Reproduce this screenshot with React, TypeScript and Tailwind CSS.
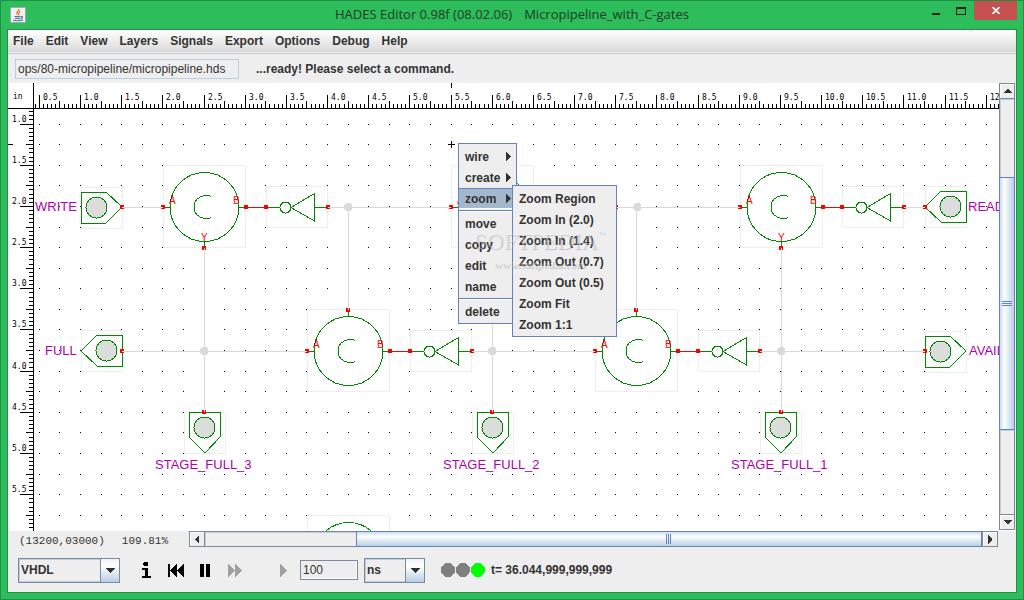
import { useState } from "react";
import type { ReactNode } from "react";

const GREEN = "#008800";
const RED = "#ff0000";
const WIRE = "#dadada";
const FRAME = "#eeeeee";

const menus = ["File", "Edit", "View", "Layers", "Signals", "Export", "Options", "Debug", "Help"];
const zoomItems = [
  "Zoom Region",
  "Zoom In (2.0)",
  "Zoom In (1.4)",
  "Zoom Out (0.7)",
  "Zoom Out (0.5)",
  "Zoom Fit",
  "Zoom 1:1",
];

// A quarter inch on screen at 109.81%
const STEP = 20.588;
const gridX = (n: number) => Math.round(38.8 + n * STEP);
const gridY = (n: number) => Math.round(123.6 + n * STEP);
const range = (from: number, to: number) => Array.from({ length: to - from }, (_, i) => from + i);

type Side = "left" | "right" | "top" | "bottom" | "none";

// Connector square, the attached wire cuts a notch in it
const Pin = ({ x, y, notch = "none" }: { x: number; y: number; notch?: Side }) => (
  <g>
    <rect x={x - 2} y={y - 2} width={4} height={4} fill={RED} stroke="none" />
    {notch === "right" && <rect x={x} y={y} width={2} height={1} fill="#fff" />}
    {notch === "left" && <rect x={x - 2} y={y} width={2} height={1} fill="#fff" />}
    {notch === "top" && <rect x={x} y={y - 2} width={1} height={2} fill="#fff" />}
    {notch === "bottom" && <rect x={x} y={y} width={1} height={2} fill="#fff" />}
  </g>
);

const PinName = ({ x, y, children }: { x: number; y: number; children: ReactNode }) => (
  <text x={x} y={y} fill={RED} fontSize={10} stroke="none">
    {children}
  </text>
);

const CGate = ({ x, y, flip = false }: { x: number; y: number; flip?: boolean }) => (
  <g transform={`translate(${x} ${y})`}>
    <rect x={-41.5} y={-41.5} width={82} height={82} fill="#fff" stroke={FRAME} />
    <g fill="none" stroke={GREEN}>
      <circle cx={-0.5} cy={0} r={34.5} />
      <path d="M6 -10.5 L4 -11.5 H0 C-7 -10.5 -11 -6 -11 0 S-7 10.5 0 11.5 H4 L6 10.5" />
      <path d={flip ? "M-40 .5 H-34 M34 .5 H41 M-.5 -40 V-34" : "M-40 .5 H-34 M34 .5 H41 M-.5 34 V40"} />
    </g>
    <PinName x={-36} y={-3}>A</PinName>
    <PinName x={28} y={-3}>B</PinName>
    {!flip && <PinName x={-4} y={34}>Y</PinName>}
    <Pin x={-42} y={0} notch="left" />
    <Pin x={41} y={0} />
    {flip ? <Pin x={-1} y={-41} notch="top" /> : <Pin x={-1} y={41} notch="bottom" />}
  </g>
);

const Inverter = ({ x, y }: { x: number; y: number }) => (
  <g transform={`translate(${x} ${y})`}>
    <rect x={0.5} y={-20.5} width={61} height={41} fill="#fff" stroke={FRAME} />
    <path d="M-20 .5 H0" stroke={RED} />
    <g fill="none" stroke={GREEN}>
      <path d="M0 .5 H14 M48.5 .5 H61" />
      <circle cx={19.5} cy={0.5} r={5.5} />
      <path d="M25 .5 L48.5 -13.5 V14 Z" />
    </g>
    <Pin x={0} y={0} />
    <Pin x={62} y={0} notch="right" />
  </g>
);

// Switches and lamps share one outline, drawn pointing right
const Port = ({ x, y, angle }: { x: number; y: number; angle: 0 | 90 | 180 }) => (
  <g transform={`translate(${x} ${y}) rotate(${angle})`}>
    <rect x={-20} y={-20} width={41} height={41} fill="#fff" stroke={FRAME} />
    <path d="M-20 -15 H5 L21 0 L5 16 H-20 Z" fill="none" stroke={GREEN} />
    <circle cx={-4.5} cy={0.5} r={10.5} fill="#dcdcdc" stroke={GREEN} />
  </g>
);

const Junction = ({ x, y }: { x: number; y: number }) => (
  <path
    transform={`translate(${x} ${y})`}
    d="M-2 -4 H2 L4 -2 V2 L2 4 H-2 L-4 2 V-2 Z"
    fill={WIRE}
    stroke="none"
  />
);

const Label = ({ x, y, children }: { x: number; y: number; children: ReactNode }) => (
  <text x={x} y={y} fill="#b000b0" fontSize={13} stroke="none">
    {children}
  </text>
);

const tickLength = (n: number) => (n % 10 === 0 ? 13 : n % 5 === 0 ? 7 : 4);

const Rulers = () => (
  <g>
    <path d="M8 108.5 H3000 M33.5 83 V3000" stroke="#000" />
    {range(-1, 260).map((n) => {
      const x = Math.round(38.8 + (n * STEP) / 5);
      return <rect key={n} x={x} y={108 - tickLength(n)} width={1} height={tickLength(n)} />;
    })}
    {range(-3, 200).map((n) => {
      const y = Math.round(123.6 + (n * STEP) / 5);
      return <rect key={n} x={33 - tickLength(n)} y={y} width={tickLength(n)} height={1} />;
    })}
    <g fontFamily="DejaVu Sans Mono, monospace" fontSize={8}>
      <text x={13} y={99}>in</text>
      {range(0, 24).map((n) => (
        <text key={n} x={gridX(n * 2) + 4} y={100}>{(0.5 + n / 2).toFixed(1)}</text>
      ))}
      {range(0, 10).map((n) => (
        <text key={n} x={12} y={gridY(n * 2) - 2}>{(1 + n / 2).toFixed(1)}</text>
      ))}
    </g>
    <path d="M451.5 83 V88 M8 144.5 H13" stroke="#000" />
  </g>
);

const Schematic = () => (
  <svg
    className="absolute inset-0 h-full w-full"
    shapeRendering="crispEdges"
    fontFamily="Liberation Sans, Arial, sans-serif"
    role="img"
    aria-label="Micropipeline schematic"
  >
    <g transform="translate(-8 -83)">
      {range(0, 70).map((col) =>
        range(0, 40).map((row) => (
          <rect key={`${col}-${row}`} x={gridX(col)} y={gridY(row)} width={1} height={1} />
        ))
      )}
      <Port x={101} y={207} angle={0} />
      <Port x={102} y={351} angle={180} />
      <Port x={946} y={207} angle={180} />
      <Port x={945} y={351} angle={0} />
      <Port x={205} y={432} angle={90} />
      <Port x={493} y={432} angle={90} />
      <Port x={781} y={432} angle={90} />
      <CGate x={205} y={207} />
      <CGate x={493} y={207} />
      <CGate x={782} y={207} />
      <CGate x={349} y={351} flip />
      <CGate x={637} y={351} flip />
      <CGate x={349} y={557} />
      <Inverter x={266} y={207} />
      <Inverter x={554} y={207} />
      <Inverter x={842} y={207} />
      <Inverter x={410} y={351} />
      <Inverter x={698} y={351} />
      <path
        fill="none"
        stroke={WIRE}
        d="M124 207.5 H161 M330 207.5 H449 M618 207.5 H738 M906 207.5 H923
          M124 351.5 H305 M474 351.5 H593 M762 351.5 H923
          M204.5 250 V411 M492.5 250 V411 M781.5 250 V411 M348.5 207 V308 M636.5 207 V308"
      />
      <Junction x={348} y={207} />
      <Junction x={637} y={207} />
      <Junction x={204} y={351} />
      <Junction x={492} y={351} />
      <Junction x={781} y={351} />
      <Pin x={122} y={207} notch="right" />
      <Pin x={122} y={351} notch="right" />
      <Pin x={925} y={207} notch="left" />
      <Pin x={925} y={351} notch="left" />
      <Pin x={204} y={412} notch="top" />
      <Pin x={492} y={412} notch="top" />
      <Pin x={781} y={412} notch="top" />
      <Label x={35} y={211}>WRITE</Label>
      <Label x={45} y={355}>FULL</Label>
      <Label x={968} y={211}>READY</Label>
      <Label x={969} y={355}>AVAIL</Label>
      <Label x={155} y={469}>STAGE_FULL_3</Label>
      <Label x={443} y={469}>STAGE_FULL_2</Label>
      <Label x={731} y={469}>STAGE_FULL_1</Label>
      <path d="M448 144.5 H455 M451.5 141 V148" stroke="#000" />
      <Rulers />
    </g>
  </svg>
);

const MenuItem = ({ label, sub = false, active = false }: { label: string; sub?: boolean; active?: boolean }) => (
  <button
    role="menuitem"
    aria-haspopup={sub || undefined}
    className={`flex h-[21px] w-full items-center justify-between border-y pl-1.5 pr-[5px] text-left whitespace-nowrap ${
      active ? "border-t-[#6382bf] border-b-white bg-[#a3b8cc]" : "border-transparent"
    }`}
  >
    {label}
    {sub && (
      <svg className="shrink-0" width="5" height="9" viewBox="0 0 5 9" fill="#333" shapeRendering="crispEdges">
        <path d="M0 0 L5 4 V5 L0 9 Z" />
      </svg>
    )}
  </button>
);

const Separator = () => (
  <div role="separator" className="h-1 pt-px">
    <div className="h-0.5 border-t border-[#6382bf] bg-white" />
  </div>
);

const ContextMenu = () => (
  <>
    <div role="menu" className="absolute top-[60px] left-[450px] w-[59px] border border-[#6382bf] bg-[#eee] pt-0.5 pb-px">
      <MenuItem label="wire" sub />
      <MenuItem label="create" sub />
      <MenuItem label="zoom" sub active />
      <Separator />
      <MenuItem label="move" />
      <MenuItem label="copy" />
      <MenuItem label="edit" />
      <MenuItem label="name" />
      <Separator />
      <MenuItem label="delete" />
    </div>
    <div role="menu" className="absolute top-[102px] left-[504px] w-[105px] border border-[#6382bf] bg-[#eee] pt-0.5 pb-px">
      {zoomItems.map((item) => (
        <MenuItem key={item} label={item} />
      ))}
    </div>
  </>
);

const Watermark = () => (
  <div className="pointer-events-none absolute top-[147px] left-[466px] font-['Liberation_Serif',serif] font-normal text-white/35 [text-shadow:1px_1px_1px_rgba(0,0,0,0.18)]">
    <div className="flex items-start text-[23px] leading-6">
      SOFTPEDIA<span className="text-[7px] leading-2">™</span>
    </div>
    <div className="pt-0.5 pl-5 text-[11px] leading-4 font-bold">www.softpedia.com</div>
  </div>
);

const arrows = {
  up: "M4 0 H5 L9 4 H0 Z",
  down: "M0 0 H9 L5 4 H4 Z",
  left: "M4 0 V9 L0 5 V4 Z",
  right: "M0 0 V9 L4 5 V4 Z",
};

const ScrollButton = ({ dir }: { dir: "up" | "down" | "left" | "right" }) => (
  <button
    aria-label={`Scroll ${dir}`}
    className="flex size-4 shrink-0 items-center justify-center border border-[#7a8a99] bg-[#eee] shadow-[inset_1px_1px_0_#fff]"
  >
    {dir === "up" || dir === "down" ? (
      <svg width="9" height="4" fill="#333" shapeRendering="crispEdges"><path d={arrows[dir]} /></svg>
    ) : (
      <svg width="4" height="9" fill="#333" shapeRendering="crispEdges"><path d={arrows[dir]} /></svg>
    )}
  </button>
);

const VerticalScroll = () => (
  <div role="scrollbar" aria-orientation="vertical" aria-controls="canvas" aria-valuenow={48} className="mr-px flex w-4 flex-col border-b border-white">
    <ScrollButton dir="up" />
    <div className="flex-[79] border-x border-[#7a8a99] bg-[#eee] shadow-[inset_1px_1px_0_#b8cfe5]" />
    <div className="flex flex-[252] items-center justify-center border border-[#6382bf] bg-linear-to-r from-[#c8dbee] via-white via-30% to-[#b8cfe5]">
      <div className="h-[5px] w-2.5 border-y border-[#6382bf] pt-px">
        <div className="h-px bg-[#6382bf]" />
      </div>
    </div>
    <div className="flex-[85] border-x border-[#7a8a99] bg-[#eee] shadow-[inset_1px_1px_0_#b8cfe5]" />
    <ScrollButton dir="down" />
  </div>
);

const HorizontalScroll = () => (
  <div role="scrollbar" aria-orientation="horizontal" aria-controls="canvas" aria-valuenow={100} className="mr-[18px] flex h-4 flex-1">
    <ScrollButton dir="left" />
    <div className="flex-[151] border-y border-[#7a8a99] bg-[#eee] shadow-[inset_1px_1px_0_#b8cfe5]" />
    <div className="flex flex-[626] items-center justify-center border border-[#6382bf] bg-linear-to-b from-[#c8dbee] via-white via-30% to-[#b8cfe5]">
      <div className="h-2.5 w-[5px] border-x border-[#6382bf] pl-px">
        <div className="h-full w-px bg-[#6382bf]" />
      </div>
    </div>
    <ScrollButton dir="right" />
  </div>
);

const Combo = ({ label, options, className }: { label: string; options: string[]; className: string }) => (
  <div className={`relative h-[25px] border border-[#7a8a99] ${className}`}>
    <select
      aria-label={label}
      className="h-full w-full appearance-none border border-[#b8cfe5] bg-[#eee] pr-5 pl-px font-bold text-[#333] outline-none"
    >
      {options.map((o) => (
        <option key={o}>{o}</option>
      ))}
    </select>
    <span className="pointer-events-none absolute inset-y-0 right-0 flex w-[19px] items-center justify-center border-l border-[#7a8a99] bg-linear-to-b from-[#eef3f8] via-white via-30% to-[#b8cfe5]">
      <svg width="10" height="5" fill="#333" shapeRendering="crispEdges"><path d="M0 0 H10 L5 5 Z" /></svg>
    </span>
  </div>
);

const ToolButton = ({ label, disabled = false, className, children }: { label: string; disabled?: boolean; className: string; children: ReactNode }) => (
  <button aria-label={label} disabled={disabled} className={className}>
    <svg width="17" height="17" viewBox="0 0 17 17" fill={disabled ? "#a0a0a0" : "#000"} shapeRendering="crispEdges">
      {children}
    </svg>
  </button>
);

const JavaIcon = () => (
  <svg width="16" height="16" viewBox="0 0 16 16" fill="none">
    <rect x="0.5" y="0.5" width="15" height="15" rx="1" fill="#eef2f5" stroke="#9aa9b5" />
    <path d="M9 2 C9 4.5 5.5 4.5 7 7.5 M10.5 4.5 C7.5 5.5 9.5 6.5 8 8.5" stroke="#e8842c" strokeWidth="1.4" />
    <path d="M4.5 9.5 H10.5 M5 11.3 H10 M11 9.5 C13 9 13 11 10.5 11.5 M3 13 C5 14 11 14 13 12.8" stroke="#4c7590" strokeWidth="1.2" />
  </svg>
);

const TitleBar = () => (
  <header className="relative flex h-7 shrink-0 items-center justify-center gap-3 font-['Open_Sans','Noto_Sans',sans-serif] text-[13px] text-[#1d3b27]">
    <div className="absolute top-1.5 left-[3px]"><JavaIcon /></div>
    <span>HADES Editor 0.98f (08.02.06)</span>
    <span>Micropipeline_with_C-gates</span>
    <div className="absolute top-0 right-0 flex h-[19px] items-stretch">
      <button aria-label="Minimize" className="flex w-6 items-center justify-center">
        <svg width="8" height="8" fill="#222" shapeRendering="crispEdges"><rect y="6" width="8" height="2" /></svg>
      </button>
      <button aria-label="Maximize" className="flex w-[26px] items-center justify-center">
        <svg width="10" height="8" fill="none" stroke="#222" shapeRendering="crispEdges">
          <path d="M.5 1 V7.5 H9.5 V1" />
          <path d="M0 1 H10" strokeWidth="2" />
        </svg>
      </button>
      <button aria-label="Close" className="flex w-[43px] items-center justify-center bg-[#c75050]">
        <svg width="8" height="7" stroke="#fff" strokeWidth="1.7"><path d="M.5 0 L7.5 7 M7.5 0 L.5 7" /></svg>
      </button>
    </div>
  </header>
);

export default function App() {
  const [path, setPath] = useState("ops/80-micropipeline/micropipeline.hds");
  const [steps, setSteps] = useState("100");

  return (
    <div className="flex h-screen flex-col border border-[#229147] bg-[#2dbd5a] px-1.5 pb-1.5 font-['Liberation_Sans',Arial,sans-serif] text-[12px] text-[#333]">
      <TitleBar />
      <div className="flex min-h-0 flex-1 flex-col border border-[#229147] bg-[#eee]">
        <nav className="flex h-[22px] shrink-0 items-center bg-linear-to-b from-white to-[#dadada] pr-1.5 pl-[5px] font-bold">
          {menus.map((m) => (
            <button key={m} className="mr-3">{m}</button>
          ))}
        </nav>
        <div className="mt-px flex h-[30px] shrink-0 items-center gap-[17px] border-t border-[#ccc] pl-[7px]">
          <input
            aria-label="Design file"
            value={path}
            onChange={(e) => setPath(e.target.value)}
            className="h-5 w-56 border border-[#b8cfe5] px-0.5 outline-none"
          />
          <span className="font-bold">...ready! Please select a command.</span>
        </div>

        <div className="flex min-h-0 flex-1">
          <main id="canvas" className="relative min-w-0 flex-1 overflow-hidden bg-white font-bold">
            <div className="font-normal"><Schematic /></div>
            <ContextMenu />
            <Watermark />
          </main>
          <VerticalScroll />
        </div>

        <div className="flex h-[17px] shrink-0">
          <div className="flex w-[181px] items-center gap-[17px] pt-1 pl-[11px] font-['Liberation_Mono',monospace] text-[11px]">
            <span>(13200,03000)</span>
            <span>109.81%</span>
          </div>
          <HorizontalScroll />
        </div>

        <footer className="flex h-11 shrink-0 items-center pl-2.5">
          <Combo label="Value format" options={["VHDL", "Verilog"]} className="w-[102px]" />
          <ToolButton label="Info" className="ml-[18px]">
            <path d="M6 0 H9 L10 1 V3 L9 4 H6 L5 3 V1 Z M4 6 H10 V14 H13 V16 H4 V14 H7 V8 H4 Z" />
          </ToolButton>
          <ToolButton label="Rewind" className="ml-[13px]">
            <path d="M0 2 H2 V8 L9 2 V8 L16 2 V15 L9 9 V15 L2 9 V15 H0 Z" />
          </ToolButton>
          <ToolButton label="Pause" className="ml-[15px]">
            <path d="M0 2 H4 V15 H0 Z M6 2 H10 V15 H6 Z" />
          </ToolButton>
          <ToolButton label="Run" disabled className="ml-2.5">
            <path d="M1 2 L8 8 V2 L15 8 V9 L8 15 V9 L1 15 Z" />
          </ToolButton>
          <ToolButton label="Single step" disabled className="ml-9">
            <path d="M0 2 L7 8 V9 L0 15 Z" />
          </ToolButton>
          <input
            aria-label="Step size"
            value={steps}
            onChange={(e) => setSteps(e.target.value)}
            className="ml-[3px] h-5 w-[58px] border border-[#7a8a99] px-0.5 shadow-[inset_-1px_-1px_0_#fff] outline-none"
          />
          <Combo label="Time unit" options={["ns", "us", "ms", "s"]} className="ml-1.5 w-[61px]" />
          <svg className="ml-4" width="46" height="14" fill="#808080" shapeRendering="crispEdges" role="img" aria-label="Simulator running">
            <circle cx="7" cy="7" r="7" />
            <circle cx="22" cy="7" r="7" />
            <circle cx="37" cy="7" r="7" fill="#00ff00" />
          </svg>
          <span className="ml-1 font-bold">t= 36.044,999,999,999</span>
        </footer>
      </div>
    </div>
  );
}
